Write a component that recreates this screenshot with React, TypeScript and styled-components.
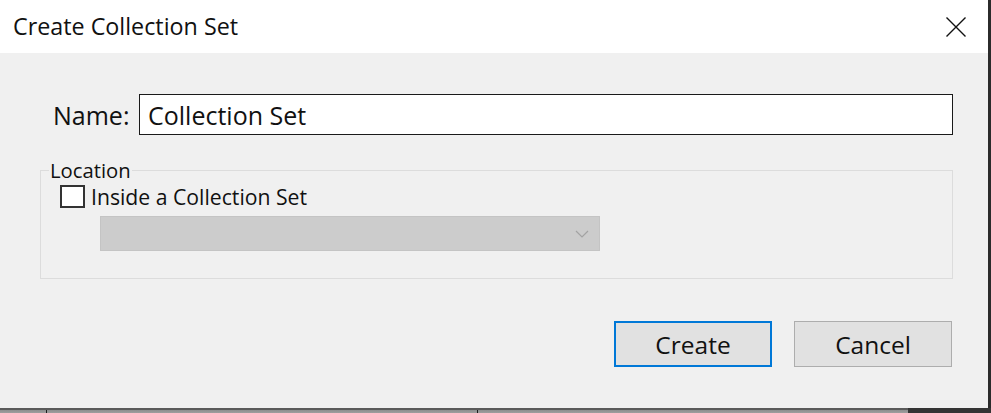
import React from "react";
import styled, { createGlobalStyle } from "styled-components";

const Global = createGlobalStyle`
  html, body { margin: 0; padding: 0; background: #f0f0f0; }
  body { font-family: "Open Sans", "Noto Sans", sans-serif; color: #000; }
  * { box-sizing: border-box; }
`;

const Page = styled.div`
  width: 991px;
  height: 413px;
  display: flex;
  flex-direction: column;
  overflow: hidden;
`;

const Top = styled.div`
  height: 408px;
  display: flex;
`;

const Dialog = styled.div`
  flex: 1;
  display: flex;
  flex-direction: column;
  background: #f0f0f0;
`;

const RightEdge = styled.div`
  width: 3px;
  background: #2b2b2b;
`;

const TitleBar = styled.div`
  height: 53px;
  background: #ffffff;
  display: flex;
  align-items: center;
  justify-content: space-between;
  padding: 0 22px 0 13px;
`;

const Title = styled.span`
  font-size: 23.3px;
  color: #111;
  line-height: 1;
  padding-top: 1px;
`;

const CloseButton = styled.div`
  width: 20px;
  height: 20px;
  display: flex;
  align-items: center;
  justify-content: center;
  margin-top: 0px;
`;

const Body = styled.div`
  padding: 41px 35px 0 40px;
  display: flex;
  flex-direction: column;
`;

const NameRow = styled.div`
  display: flex;
  align-items: center;
  height: 41px;
`;

const NameLabel = styled.label`
  font-size: 25px;
  width: 86px;
  padding-left: 13px;
  box-sizing: content-box;
  color: #111;
`;

const NameInput = styled.div`
  flex: 1;
  height: 41px;
  background: #fff;
  border: 1px solid #1a1a1a;
  display: flex;
  align-items: center;
  padding-left: 8px;
  font-size: 25px;
  color: #111;
`;

const Group = styled.fieldset`
  margin: 23px 0 0 0;
  padding: 0 0 27px 0;
  border: 1px solid #dcdcdc;
  min-width: 0;
`;

const Legend = styled.legend`
  margin-left: 8px;
  padding: 0 1px;
  font-size: 20.3px;
  line-height: 24px;
  color: #111;
`;

const CheckRow = styled.div`
  display: flex;
  align-items: center;
  margin: 3px 0 0 19px;
  height: 23px;
`;

const CheckBox = styled.span`
  width: 25px;
  height: 23px;
  border: 2px solid #333;
  background: #fff;
  display: inline-block;
`;

const CheckLabel = styled.span`
  margin-left: 6px;
  font-size: 21.2px;
  color: #111;
`;

const Select = styled.div`
  margin: 8px 0 0 59px;
  width: 500px;
  height: 35px;
  background: #cccccc;
  border: 1px solid #c4c4c4;
  display: flex;
  align-items: center;
  justify-content: flex-end;
  padding-right: 10px;
`;

const ButtonRow = styled.div`
  display: flex;
  justify-content: flex-end;
  gap: 22px;
  margin: 42px 1px 0 0;
`;

const Button = styled.div<{ $primary?: boolean }>`
  width: 158px;
  height: 46px;
  background: #e1e1e1;
  border: ${(p) => (p.$primary ? "2px solid #0078d7" : "1px solid #adadad")};
  display: flex;
  align-items: center;
  justify-content: center;
  font-size: 24.5px;
  color: #111;
`;

const BottomStrip = styled.div`
  height: 5px;
  display: flex;
`;

const Seg = styled.div<{ $w?: number; $dark?: boolean }>`
  ${(p) => (p.$w ? `width: ${p.$w}px;` : "flex: 1;")}
  background: ${(p) =>
    p.$dark
      ? "#343434"
      : "linear-gradient(#5a5a5a 0, #5a5a5a 2px, #8e8e8e 2px, #9e9e9e 5px)"};
`;

const Divider = styled.div`
  width: 1px;
  background: linear-gradient(#5a5a5a 0, #5a5a5a 2px, #1e1e1e 2px);
`;

export default function App() {
  return (
    <Page>
      <Global />
      <Top>
        <Dialog>
          <TitleBar>
            <Title>Create Collection Set</Title>
            <CloseButton>
              <svg width="20" height="20" viewBox="0 0 20 20">
                <path d="M0.5 0.5 L19.5 19.5 M19.5 0.5 L0.5 19.5" stroke="#111" strokeWidth="1.4" fill="none" />
              </svg>
            </CloseButton>
          </TitleBar>
          <Body>
            <NameRow>
              <NameLabel>Name:</NameLabel>
              <NameInput>Collection Set</NameInput>
            </NameRow>
            <Group>
              <Legend>Location</Legend>
              <CheckRow>
                <CheckBox />
                <CheckLabel>Inside a Collection Set</CheckLabel>
              </CheckRow>
              <Select>
                <svg width="14" height="8" viewBox="0 0 14 8">
                  <path d="M1 1 L7 7 L13 1" stroke="#a3a3a3" strokeWidth="1.2" fill="none" />
                </svg>
              </Select>
            </Group>
            <ButtonRow>
              <Button $primary>Create</Button>
              <Button>Cancel</Button>
            </ButtonRow>
          </Body>
        </Dialog>
        <RightEdge />
      </Top>
      <BottomStrip>
        <Seg $w={46} />
        <Divider />
        <Seg $w={430} />
        <Divider />
        <Seg />
        <Seg $w={83} $dark />
      </BottomStrip>
    </Page>
  );
}
